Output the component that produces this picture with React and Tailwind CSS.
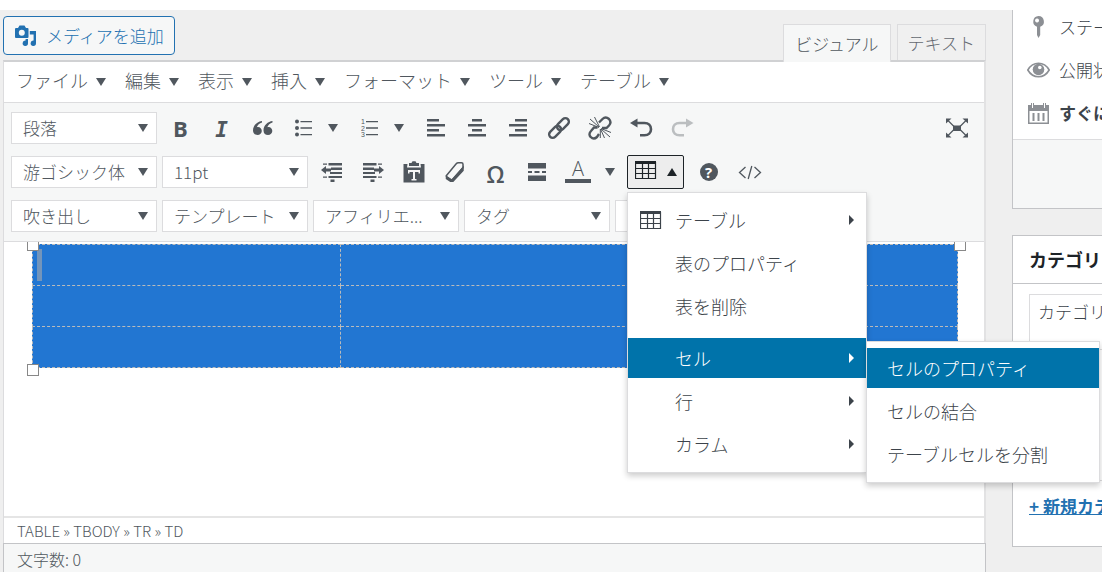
import React from 'react';

const menus = ['ファイル', '編集', '表示', '挿入', 'フォーマット', 'ツール', 'テーブル'];

const Caret = ({ up = false, className = '' }) => (
  <svg width="10" height="8" viewBox="0 0 10 8" fill="currentColor" className={`shrink-0 ${className}`}>
    <path d={up ? 'M0 8h10L5 0z' : 'M0 0h10L5 8z'} />
  </svg>
);

const Icon = ({ size = 20, children }) => (
  <svg width={size} height={size} viewBox="0 0 20 20" fill="currentColor" className="shrink-0">
    {children}
  </svg>
);

const TableIcon = () => (
  <svg width="22" height="19" viewBox="0 0 22 19" fill="none" stroke="currentColor" className="shrink-0">
    <path d="M0 1.500h21" strokeWidth="3" />
    <path d="M.5 1v17M7.500 2v16M13.500 2v16M20.500 1v17M0 7.500h21M0 12.500h21M0 17.500h21" strokeWidth="1.200" />
  </svg>
);

const ToolButton = ({ label, wide = false, children }) => (
  <button
    type="button"
    aria-label={label}
    className={`h-8 shrink-0 flex items-center justify-center ${wide ? 'w-[66px] gap-[14px]' : 'w-[41px]'}`}
  >
    {children}
  </button>
);

const ToolSelect = ({ label, value }) => (
  <div className="relative w-[146px] shrink-0">
    <select
      aria-label={label}
      className="appearance-none w-full h-8 pl-[11px] pr-6 bg-white border border-[#dcdcde] text-[17px] leading-[28px] text-[#50575e]"
    >
      <option>{value}</option>
    </select>
    <Caret className="absolute right-[9px] top-3 pointer-events-none" />
  </div>
);

const MenuItem = ({ icon, label, arrow = false, active = false }) => (
  <button
    type="button"
    role="menuitem"
    className={`w-full h-10 flex items-center text-left text-[18px] leading-6 pl-3 pr-3 ${
      active ? 'bg-[#0073aa] text-white' : 'text-[#3c434a]'
    }`}
  >
    <span className="w-[35px]">{icon}</span>
    <span className="flex-1">{label}</span>
    {arrow && (
      <svg width="5" height="10" viewBox="0 0 5 10" fill="currentColor">
        <path d="M0 0v10l5-5z" />
      </svg>
    )}
  </button>
);

const SubmenuItem = ({ label, active = false }) => (
  <button
    type="button"
    role="menuitem"
    className={`h-10 px-5 text-left text-[18px] leading-6 ${
      active ? 'bg-[#0073aa] text-white' : 'text-[#3c434a]'
    }`}
  >
    {label}
  </button>
);

const TableMenu = () => (
  <div
    role="menu"
    className="absolute z-10 left-0 top-[37px] w-[240px] pt-[7px] pb-2 flex flex-col gap-[3px] bg-white border border-[#dcdcde] shadow-[0_3px_6px_rgba(0,0,0,0.2)]"
  >
    <MenuItem icon={<TableIcon />} label="テーブル" arrow />
    <MenuItem label="表のプロパティ" />
    <MenuItem label="表を削除" />
    <div className="relative mt-[9px]">
      <MenuItem label="セル" arrow active />
      <div
        role="menu"
        className="absolute left-full top-[3px] w-[234px] pt-[6px] pb-2 flex flex-col gap-[3px] bg-white border border-[#dcdcde] shadow-[0_3px_6px_rgba(0,0,0,0.2)]"
      >
        <SubmenuItem label="セルのプロパティ" active />
        <SubmenuItem label="セルの結合" />
        <SubmenuItem label="テーブルセルを分割" />
      </div>
    </div>
    <MenuItem label="行" arrow />
    <MenuItem label="カラム" arrow />
  </div>
);

const EditorHeader = () => (
  <div className="h-[50px] flex items-start justify-between">
    <button
      type="button"
      className="mt-[6px] h-[39px] px-[10px] flex items-center gap-[10px] rounded-[4px] border border-[#2271b1] bg-[#f6f7f7] text-[17px] leading-6 text-[#2271b1]"
    >
      <svg width="22" height="22" viewBox="0 0 22 22" fill="currentColor">
        <path
          fillRule="evenodd"
          d="M2 3h2l1.500-2.500h5L12 3h1.500q1 0 1 1v8q0 1-1 1H2q-1 0-1-1V4q0-1 1-1zm5.800 1.800a3 3 0 1 0 0 6 3 3 0 0 0 0-6z"
        />
        <path d="M15.800 6H22v12.200a2.700 2.700 0 1 1-2.400-2.700V9.500h-3.800zM14 14v4.200a2.700 2.700 0 1 1-2.400-2.700V14z" />
      </svg>
      メディアを追加
    </button>
    <div className="mt-[14px] flex gap-[6px] text-[17px] leading-6">
      <button type="button" className="h-[38px] px-[11px] bg-[#f6f7f7] border border-b-0 border-[#dcdcde] text-[#50575e]">
        ビジュアル
      </button>
      <button type="button" className="h-9 px-[10px] bg-[#f0f0f0] border border-b-0 border-[#dcdcde] text-[#646970]">
        テキスト
      </button>
    </div>
  </div>
);

const Toolbar = () => (
  <div className="bg-[#f6f7f7] border-b border-[#dcdcde] pl-[7px] pr-[7px] py-[9px] flex flex-col gap-3 text-[#50575e]">
    <div className="flex items-center">
      <ToolSelect label="段落" value="段落" />
      <div className="flex flex-1 pl-[3px]">
        <ToolButton label="太字">
          <span className="font-['Open_Sans'] font-bold text-[22px] leading-6">B</span>
        </ToolButton>
        <ToolButton label="イタリック">
          <span className="pt-1 font-['DejaVu_Sans_Mono'] font-bold italic text-[21px] leading-6">I</span>
        </ToolButton>
        <ToolButton label="引用">
          <Icon>
            <path d="M9 3C4.500 3.500 0 7 0 12.500 0 15.500 2 17 4.500 17 7 17 8.800 15.300 8.800 13S7.200 9 5 9c-.5 0-.8 0-1.200.2C4.500 7 6.500 5.300 9 4.500zM19.500 3c-4.500.5-9 4-9 9.500 0 3 2 4.500 4.500 4.500 2.500 0 4.300-1.700 4.300-4s-1.600-4-3.800-4c-.5 0-.8 0-1.200.2.7-2.200 2.700-3.900 5.200-4.700z" />
          </Icon>
        </ToolButton>
        <ToolButton label="番号なしリスト" wide>
          <Icon>
            <circle cx="3" cy="3.500" r="2" />
            <circle cx="3" cy="10" r="2" />
            <circle cx="3" cy="16.500" r="2" />
            <path d="M6.500 3H18v1.200H6.500zM6.500 9.300H18v1.400H6.500zM6.500 16H18v1.200H6.500z" />
          </Icon>
          <Caret />
        </ToolButton>
        <ToolButton label="番号付きリスト" wide>
          <Icon>
            <text x="1" y="6" fontSize="7" fontFamily="Liberation Sans">1</text>
            <text x="1" y="12.500" fontSize="7" fontFamily="Liberation Sans">2</text>
            <text x="1" y="19" fontSize="7" fontFamily="Liberation Sans">3</text>
            <path d="M6 3H18v1.200H6zM6 9.300H18v1.400H6zM6 16H18v1.200H6z" />
          </Icon>
          <Caret />
        </ToolButton>
        <ToolButton label="左寄せ">
          <Icon>
            <path d="M1 1h12v2.400H1zM1 6h18v2.400H1zM1 11h12v2.400H1zM1 16h18v2.400H1z" />
          </Icon>
        </ToolButton>
        <ToolButton label="中央揃え">
          <Icon>
            <path d="M5 1h10v2.400H5zM1 6h18v2.400H1zM5 11h10v2.400H5zM1 16h18v2.400H1z" />
          </Icon>
        </ToolButton>
        <ToolButton label="右寄せ">
          <Icon>
            <path d="M7 1h12v2.400H7zM1 6h18v2.400H1zM7 11h12v2.400H7zM1 16h18v2.400H1z" />
          </Icon>
        </ToolButton>
        <ToolButton label="リンクの挿入">
          <svg width="24" height="24" viewBox="0 0 24 24" fill="none" stroke="currentColor" strokeWidth="2.400">
            <g transform="rotate(-45 12 12)">
              <rect x="-.5" y="8.500" width="14" height="7" rx="3.500" />
              <rect x="10.500" y="8.500" width="14" height="7" rx="3.500" />
            </g>
          </svg>
        </ToolButton>
        <ToolButton label="リンクの削除">
          <svg width="24" height="24" viewBox="0 0 24 24" fill="none" stroke="currentColor">
            <path
              strokeWidth="2.400"
              d="M11 6.500L14.500 3c2-2 4.500-1.800 6.500 0 1.800 2 1.800 4.500 0 6.500l-2.500 2.500h-4.500M9.500 11.500H6L3 15c-2 2-2 4.500-.3 6 1.800 1.800 4.300 1.800 6.300 0l2-3"
            />
            <path strokeWidth="1" d="M2 3l9 8M6.500 1l5 10M1 7.500l10 4M13 13l9 8M12.500 13l4 9M13 12.500l10 4M12.300 13v9" />
          </svg>
        </ToolButton>
        <ToolButton label="元に戻す">
          <svg width="24" height="24" viewBox="0 0 24 24" fill="none" stroke="currentColor">
            <path strokeWidth="2.600" d="M8 7h7.500c4 0 6.500 2.600 6.500 6.200 0 3.500-2.500 6-6.500 6H11" />
            <path d="M1 7l7.500-4.500v9z" fill="currentColor" stroke="none" />
          </svg>
        </ToolButton>
        <ToolButton label="やり直し">
          <svg width="24" height="24" viewBox="0 0 24 24" fill="none" stroke="currentColor" className="text-[#bbbec0]">
            <path strokeWidth="2.600" d="M16 7H9.500C5.500 7 3 9.600 3 13.200c0 3.500 2.500 6 6.500 6H14" />
            <path d="M23.500 7L16 2.500v9z" fill="currentColor" stroke="none" />
          </svg>
        </ToolButton>
      </div>
      <ToolButton label="フルスクリーン">
        <svg width="22" height="20" viewBox="0 0 22 20" fill="currentColor">
          <path d="M0 .5h5.500L0 5.500zM22 .5h-5.500l5.500 5zM0 19.500h5.500l-5.500-5zM22 19.500h-5.500l5.500-5zM7 7.500h8v5.500H7z" />
          <path d="M2 2.500l6 6M20 2.500l-6 6M2 17.500l6-6M20 17.500l-6-6" stroke="currentColor" strokeWidth="1.200" />
        </svg>
      </ToolButton>
    </div>

    <div className="h-8 flex items-center">
      <div className="flex gap-[5px]">
        <ToolSelect label="フォント" value="游ゴシック体" />
        <ToolSelect label="フォントサイズ" value="11pt" />
      </div>
      <div className="flex items-center pl-[3px]">
        <ToolButton label="インデントを減らす">
          <svg width="22" height="20" viewBox="0 0 22 20" fill="currentColor">
            <path d="M7.500 1H21v2.400H7.500zM10 5.500h11V8H10zM9 10h12v2H9zM7.500 14H21v2H7.500zM9.500 17.500h4V20h-4zM0 8l5-4v2.500h5v3H5V12zM2 1.500h4v1.200H2zM2 14.500h4v1.200H2z" />
          </svg>
        </ToolButton>
        <ToolButton label="インデントを増やす">
          <svg width="22" height="20" viewBox="0 0 22 20" fill="currentColor">
            <path d="M1 1h13.500v2.400H1zM1 5.500h11V8H1zM1 10h12v2H1zM1 14h13.500v2H1zM8.500 17.500h4V20h-4zM22 8l-5-4v2.500h-5v3h5V12zM16 1.500h4v1.200h-4zM16 14.500h4v1.200h-4z" />
          </svg>
        </ToolButton>
        <ToolButton label="テキストとしてペースト">
          <svg width="22" height="22" viewBox="0 0 22 22" fill="currentColor">
            <path
              fillRule="evenodd"
              d="M.5 3h4l-.5 3.500h14L17.500 3h4v18.500H.5zM5 9v3.500h1.500V11H10v7H8.500v1.500h5V18H12v-7h3.500v1.500H17V9z"
            />
            <path d="M6 5V2h2.500L9.500.2h3l1 1.800H16v3z" />
          </svg>
        </ToolButton>
        <ToolButton label="書式設定をクリア">
          <svg width="20" height="22" viewBox="0 0 20 22" fill="none" stroke="currentColor" strokeWidth="1.500">
            <path d="M1.500 14.500L11 3q1-1.200 2.500-1.200h3q1.500 0 1.500 1.500v3.500L7.500 18.500q-1 .8-2.200 0L1.800 16q-.8-.7-.3-1.500z" />
            <path d="M1.500 15.500l4.500 3.200q.8.300 1.500-.3L18 6.500v3L8 20.300H5.500L1.500 17.500z" fill="currentColor" />
          </svg>
        </ToolButton>
        <ToolButton label="特殊文字">
          <span className="pt-1 font-['Open_Sans'] font-semibold text-[23px] leading-6">Ω</span>
        </ToolButton>
        <ToolButton label="続きを読む">
          <Icon>
            <path d="M1 1h18v5.500H1zM1 9h4v2H1zM7.500 9h5v2h-5zM15 9h4v2h-4zM1 13.500h18V19H1z" />
          </Icon>
        </ToolButton>
        <ToolButton label="テキスト色" wide>
          <span className="w-[26px] h-[22px] border-b-4 border-current font-['Open_Sans'] text-[20px] leading-4">
            A
          </span>
          <Caret />
        </ToolButton>
        <div className="relative mx-1">
          <button
            type="button"
            aria-label="テーブル"
            aria-expanded="true"
            className="w-[57px] h-[34px] pb-1 flex items-center justify-center gap-[10px] border border-[#1d2327] rounded-[2px] bg-[#ededed] text-[#1d2327]"
          >
            <TableIcon />
            <Caret up className="mt-1" />
          </button>
          <TableMenu />
        </div>
        <ToolButton label="ヘルプ">
          <span className="size-[18px] rounded-full bg-[#50575e] text-white font-['Open_Sans'] font-bold text-[15px] leading-[18px]">
            ?
          </span>
        </ToolButton>
        <ToolButton label="ソースコード">
          <svg width="24" height="16" viewBox="0 0 24 16" fill="none" stroke="currentColor" strokeWidth="1.300">
            <path d="M7.500 3L1.500 8.500l6 5.500M16.500 3l6 5.500-6 5.500M13.800 2l-3.600 13" />
          </svg>
        </ToolButton>
      </div>
    </div>

    <div className="flex gap-[5px]">
      <ToolSelect label="吹き出し" value="吹き出し" />
      <ToolSelect label="テンプレート" value="テンプレート" />
      <ToolSelect label="アフィリエイト" value="アフィリエ..." />
      <ToolSelect label="タグ" value="タグ" />
      <ToolSelect label="ランキング" value="" />
    </div>
  </div>
);

const cell = 'h-[41px] p-0 border border-dashed border-[#bbb]';

const Content = () => (
  <div className="h-[274px] pl-7 pr-[26px] pt-[2px] overflow-hidden">
    <div className="relative">
      <table className="w-full table-fixed border-collapse bg-[#2276d2]">
        <tbody>
          {[0, 1, 2].map((row) => (
            <tr key={row}>
              {[0, 1, 2].map((col) => (
                <td key={col} className={cell}>
                  {row === 0 && col === 0 && <div className="ml-1 w-[5px] h-8 bg-[#7395bb]" />}
                </td>
              ))}
            </tr>
          ))}
        </tbody>
      </table>
      <span className="absolute -left-[5px] -top-[5px] size-3 bg-white border border-[#888]" />
      <span className="absolute -right-[8px] -top-[5px] size-3 bg-white border border-[#888]" />
      <span className="absolute -left-[5px] -bottom-[8px] size-3 bg-white border border-[#888]" />
    </div>
  </div>
);

const Editor = () => (
  <main className="flex-1 min-w-0">
    <EditorHeader />
    <div className="border-l border-r-2 border-t-2 border-l-[#dcdcde] border-r-[#e2e2e3] border-t-[#d0d1d3] bg-white">
      <div className="h-[41px] pl-3 pb-1 flex items-center gap-[19px] border-b border-[#dcdcde] text-[18px] leading-6 text-[#50575e]">
        {menus.map((menu) => (
          <button key={menu} type="button" className="flex items-center gap-2">
            {menu}
            <Caret className="mt-1" />
          </button>
        ))}
      </div>
      <Toolbar />
      <Content />
      <div className="h-[27px] pl-[13px] border-t-2 border-[#e5e5e5] text-[15px] leading-[26px] text-[#50575e]">
        TABLE » TBODY » TR » TD
      </div>
    </div>
    <div className="h-[30px] pl-[13px] border border-b-0 border-[#c3c4c7] bg-[#f6f7f7] text-[16px] leading-[30px] text-[#50575e]">
      文字数: 0
    </div>
  </main>
);

const Sidebar = () => (
  <aside className="w-[90px] shrink-0 overflow-hidden whitespace-nowrap text-[17px] leading-6 text-[#3c434a]">
    <section className="w-[420px] border-l border-b border-[#c3c4c7] bg-white">
      <ul className="h-[129px] pt-[5px] pl-[14px] flex flex-col gap-[19px]">
        <li className="flex items-center gap-[9px]">
          <svg width="23" height="22" viewBox="0 0 23 22" fill="#8c8f94">
            <path
              fillRule="evenodd"
              d="M11.500 0a5.500 5.500 0 0 1 1.700 10.700V19l-1.700 3-1.500-3v-8.300A5.500 5.500 0 0 1 11.500 0zm-1.500 2.500a2 2 0 1 0 .1 0z"
            />
          </svg>
          ステータス:
        </li>
        <li className="flex items-center gap-[9px]">
          <svg width="23" height="16" viewBox="0 0 23 16">
            <path d="M.8 8C6-1 17-1 22.200 8 17 17 6 17 .8 8z" fill="#fff" stroke="#8c8f94" strokeWidth="1.600" />
            <circle cx="11.500" cy="7.500" r="5.800" fill="#8c8f94" />
            <circle cx="12.800" cy="5.500" r="1.800" fill="#fff" />
          </svg>
          公開状態:
        </li>
        <li className="flex items-center gap-[9px] font-bold">
          <svg width="23" height="22" viewBox="0 0 23 22" fill="#8c8f94">
            <path
              fillRule="evenodd"
              d="M1 3h3V1h3v2h9V1h3v2h3v19H1zM2.500 9v11.500h18V9zM5.500 11h2v8h-2zM10.500 11h2v8h-2zM15.500 11h2v8h-2z"
            />
            <path d="M5 1h1v5H5zM17 1h1v5h-1z" fill="#fff" />
          </svg>
          すぐに公開する
        </li>
      </ul>
      <div className="h-[69px] border-t border-[#dcdcde] bg-[#f6f7f7]" />
    </section>
    <section className="w-[420px] mt-[26px] h-[312px] border border-[#c3c4c7] bg-white">
      <h2 className="h-[48px] pl-4 border-b border-[#c3c4c7] text-[18px] leading-[47px] font-bold text-[#1d2327]">
        カテゴリー
      </h2>
      <div className="px-4 pt-[10px]">
        <button type="button" className="block h-[55px] w-[110px] pl-2 pb-5 text-left border border-b-0 border-[#dcdcde]">
          カテゴリー一覧
        </button>
        <div className="h-[132px] border border-[#dcdcde]" />
        <a href="#category-add" className="mt-[13px] inline-block font-bold underline text-[#2271b1]">
          + 新規カテゴリーを追加
        </a>
      </div>
    </section>
  </aside>
);

const App = () => {
  return (
    <div className="min-h-screen overflow-hidden bg-[#efefef] border-t-[10px] border-white font-['Noto_Sans_CJK_JP',sans-serif] font-light">
      <div className="flex gap-[26px] pl-[3px]">
        <Editor />
        <Sidebar />
      </div>
    </div>
  );
};

export default App;
